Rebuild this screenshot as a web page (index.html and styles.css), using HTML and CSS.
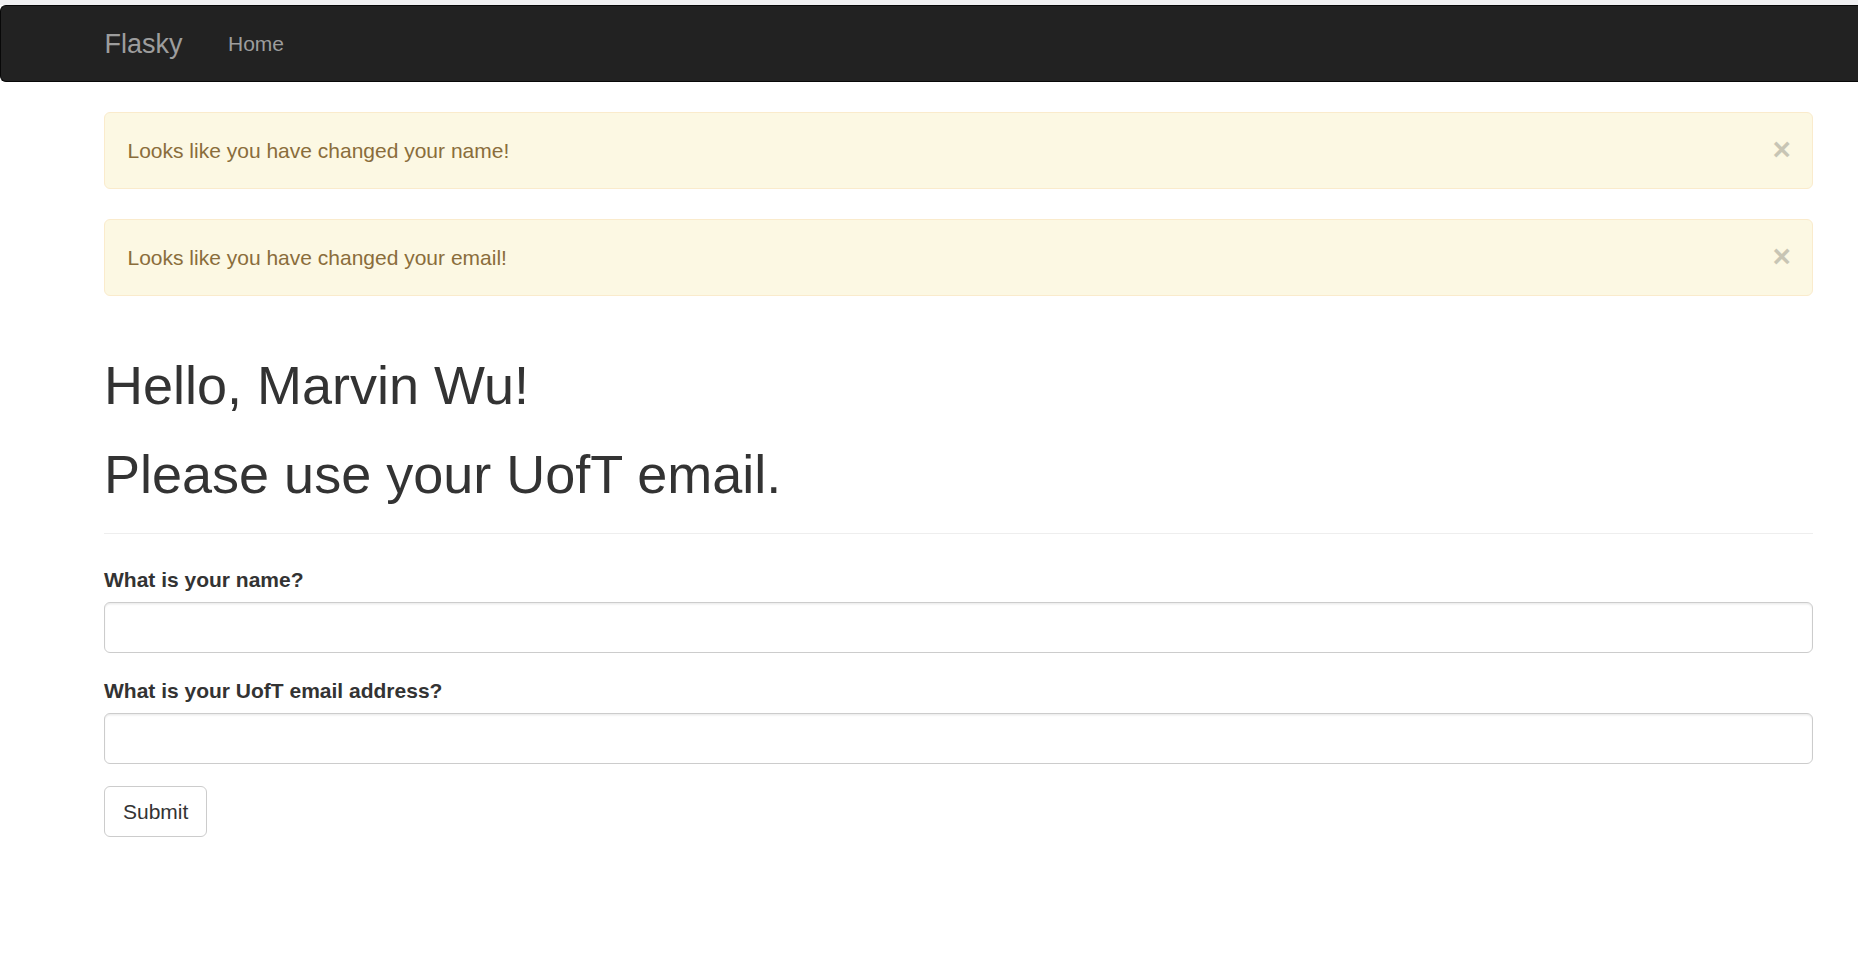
FILE: index.html
```html
<!DOCTYPE html>
<html lang="en">
<head>
<meta charset="utf-8">
<title>Flasky</title>
<link rel="stylesheet" href="styles.css">
</head>
<body>
<div class="topstrip"></div>
<nav class="navbar">
  <a class="brand" href="#">Flasky</a>
  <ul class="nav">
    <li><a href="#">Home</a></li>
  </ul>
</nav>
<main class="container">
  <div class="alert">
    <span class="alert-text">Looks like you have changed your name!</span>
    <button class="close" type="button">&times;</button>
  </div>
  <div class="alert">
    <span class="alert-text">Looks like you have changed your email!</span>
    <button class="close" type="button">&times;</button>
  </div>
  <div class="page-header">
    <h1>Hello, Marvin Wu!</h1>
    <h1>Please use your UofT email.</h1>
  </div>
  <form class="form">
    <div class="form-group">
      <label class="label" for="name">What is your name?</label>
      <input class="form-control" id="name" type="text">
    </div>
    <div class="form-group">
      <label class="label" for="email">What is your UofT email address?</label>
      <input class="form-control" id="email" type="text">
    </div>
    <button class="btn" type="button">Submit</button>
  </form>
</main>
</body>
</html>
```
FILE: styles.css
```css
html, body {
  margin: 0;
  padding: 0;
}
body {
  font-family: "Liberation Sans", Arial, Helvetica, sans-serif;
  font-size: 21px;
  line-height: 30px;
  color: #333;
  background: #fff;
}
.topstrip {
  height: 5px;
  background: #f0f0f2;
}
.navbar {
  display: flex;
  align-items: flex-start;
  background: #222;
  border: 1px solid #080808;
  border-right: none;
  border-radius: 6px 0 0 6px;
  height: 75px;
  margin-bottom: 30px;
  padding-left: 81px;
}
.brand {
  display: block;
  padding: 22.5px;
  font-size: 27px;
  line-height: 30px;
  color: #9d9d9d;
  text-decoration: none;
}
.nav {
  list-style: none;
  margin: 0;
  padding: 0;
  display: flex;
}
.nav a {
  display: block;
  padding: 22.5px 22.5px 22.5px 23px;
  font-size: 21px;
  line-height: 30px;
  color: #9d9d9d;
  text-decoration: none;
}
.container {
  padding: 0 45px 60px 104px;
}
.alert {
  display: flex;
  align-items: center;
  justify-content: space-between;
  padding: 22.5px 21px 22.5px 22.5px;
  margin-bottom: 30px;
  border: 1px solid #faebcc;
  border-radius: 6px;
  background: #fcf8e3;
  color: #8a6d3b;
}
.close {
  position: relative;
  top: -1.5px;
  border: 0;
  background: transparent;
  padding: 0;
  margin: 0;
  font-family: "Liberation Sans", Arial, sans-serif;
  font-size: 31.5px;
  font-weight: bold;
  line-height: 30px;
  height: 30px;
  color: #000;
  opacity: 0.2;
  cursor: pointer;
}
.page-header {
  margin: 60px 0 30px;
  padding-bottom: 13.5px;
  border-bottom: 1px solid #eee;
}
h1 {
  font-family: "Liberation Sans", Arial, Helvetica, sans-serif;
  font-size: 54px;
  font-weight: 500;
  line-height: 1.1;
  margin: 30px 0 15px;
  color: #333;
}
.page-header h1:first-child {
  margin-top: 0;
}
.form-group {
  margin-bottom: 22.5px;
}
.label {
  display: inline-block;
  margin-top: 1px;
  margin-bottom: 6.5px;
  font-weight: bold;
}
.form-control {
  display: block;
  box-sizing: border-box;
  width: 100%;
  height: 51px;
  padding: 9px 18px;
  font: inherit;
  color: #555;
  background: #fff;
  border: 1px solid #ccc;
  border-radius: 6px;
  box-shadow: inset 0 1.5px 1.5px rgba(0, 0, 0, 0.075);
  margin: 0;
}
.btn {
  display: inline-block;
  box-sizing: border-box;
  height: 51px;
  padding: 9px 18px;
  font: inherit;
  line-height: 30px;
  color: #333;
  background: #fff;
  border: 1px solid #ccc;
  border-radius: 6px;
  margin: 0;
  cursor: pointer;
}
```
